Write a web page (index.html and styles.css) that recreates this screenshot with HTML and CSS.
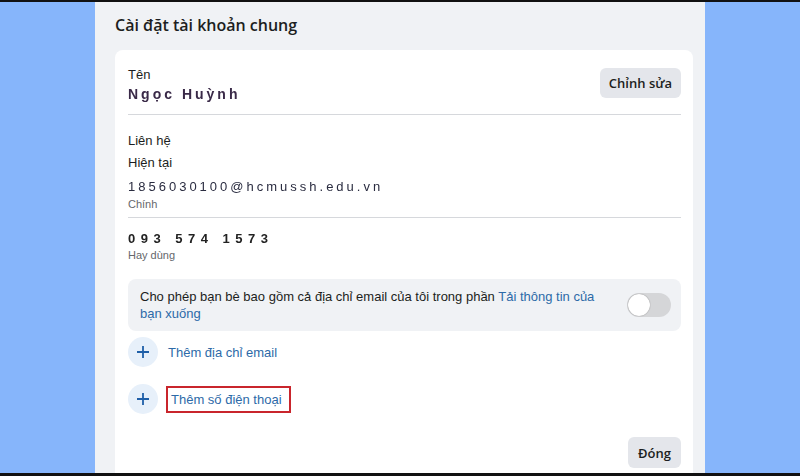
FILE: index.html
```html
<!DOCTYPE html>
<html lang="vi">
<head>
<meta charset="utf-8">
<link rel="stylesheet" href="styles.css">
</head>
<body>
<div class="frame">
  <div class="side"></div>
  <div class="panel">
    <h1 class="title">Cài đặt tài khoản chung</h1>
    <div class="card">
      <div class="name-row">
        <div>
          <div class="label">Tên</div>
          <div class="name">Ngọc Huỳnh</div>
        </div>
        <button class="btn">Chỉnh sửa</button>
      </div>
      <div class="divider"></div>
      <div class="label contact">Liên hệ</div>
      <div class="label current">Hiện tại</div>
      <div class="email">1856030100@hcmussh.edu.vn</div>
      <div class="sub">Chính</div>
      <div class="divider d2"></div>
      <div class="phone">093 574 1573</div>
      <div class="sub">Hay dùng</div>
      <div class="toggle-box">
        <p class="toggle-text">Cho phép bạn bè bao gồm cả địa chỉ email của tôi trong phần <span class="link">Tải thông tin của bạn xuống</span></p>
        <div class="switch"><div class="knob"></div></div>
      </div>
      <div class="add-row first">
        <div class="plus"><svg width="14" height="14" viewBox="0 0 14 14"><path d="M7 1v12M1 7h12" stroke="#1f5fa8" stroke-width="1.8" fill="none"/></svg></div>
        <span class="add-text">Thêm địa chỉ email</span>
      </div>
      <div class="add-row second">
        <div class="plus"><svg width="14" height="14" viewBox="0 0 14 14"><path d="M7 1v12M1 7h12" stroke="#1f5fa8" stroke-width="1.8" fill="none"/></svg></div>
        <span class="add-text boxed">Thêm số điện thoại</span>
      </div>
      <div class="footer">
        <button class="btn close">Đóng</button>
      </div>
    </div>
  </div>
  <div class="side"></div>
</div>
</body>
</html>
```
FILE: styles.css
```css
* { box-sizing: border-box; }
html, body { margin: 0; padding: 0; }
body {
  width: 800px;
  height: 476px;
  overflow: hidden;
  font-family: "Liberation Sans", Arial, sans-serif;
  color: #1c1e21;
  background: #000;
}
.frame {
  display: flex;
  height: 476px;
  border-top: 2px solid #111;
  border-bottom: 3px solid #111;
  overflow: hidden;
}
.side {
  width: 95px;
  flex: none;
  background: #86b5fb;
}
.panel {
  width: 610px;
  flex: none;
  background: #f0f2f5;
  padding: 0 12px 0 20px;
}
.title {
  margin: 0;
  padding-top: 12px;
  height: 48px;
  font-family: "Open Sans", "Liberation Sans", sans-serif;
  font-size: 16px;
  font-weight: 600;
  color: #1c1e21;
}
.card {
  background: #fff;
  border-radius: 8px;
  padding: 16px 12px 0 13px;
  height: 460px;
}
.name-row {
  display: flex;
  justify-content: space-between;
  align-items: flex-start;
  height: 48px;
}
.label {
  font-size: 13px;
  line-height: 18px;
  color: #1c1e21;
}
.name {
  font-size: 14px;
  font-weight: bold;
  letter-spacing: 3px;
  color: #3a2a48;
  line-height: 20px;
  filter: blur(0.5px);
}
.btn {
  border: none;
  background: #e4e6eb;
  border-radius: 6px;
  font-family: "Open Sans", "Liberation Sans", sans-serif;
  font-size: 13px;
  font-weight: 600;
  color: #1c1e21;
  height: 30px;
  padding: 0 9px;
  margin-top: 2px;
}
.divider {
  height: 1px;
  background: #d6d8dc;
}
.contact { margin-top: 17px; }
.current { margin-top: 4px; }
.email {
  margin-top: 6px;
  font-size: 13px;
  line-height: 18px;
  letter-spacing: 3px;
  color: #2a2c40;
  filter: blur(0.3px);
}
.sub {
  font-size: 11px;
  color: #65676b;
  line-height: 16px;
}
.d2 { margin-top: 5px; }
.phone {
  margin-top: 13px;
  font-size: 13px;
  font-weight: bold;
  letter-spacing: 5.5px;
  line-height: 16px;
  color: #222;
  filter: blur(0.4px);
}
.toggle-box {
  margin-top: 16px;
  background: #f0f2f5;
  border-radius: 8px;
  height: 52px;
  padding: 0 10px 0 12px;
  display: flex;
  align-items: center;
  justify-content: space-between;
}
.toggle-text {
  margin: 0;
  font-size: 13px;
  line-height: 17px;
  width: 470px;
  color: #1c1e21;
}
.link { color: #2d6aa8; }
.switch {
  width: 44px;
  height: 24px;
  border-radius: 12px;
  background: #d5d6d8;
  position: relative;
}
.knob {
  position: absolute;
  left: 1px;
  top: 1px;
  width: 22px;
  height: 22px;
  border-radius: 50%;
  background: #fff;
  box-shadow: 0 0 1px rgba(0,0,0,.5);
}
.add-row {
  display: flex;
  align-items: center;
  height: 32px;
}
.first { margin-top: 5px; }
.second { margin-top: 15px; }
.plus {
  width: 30px;
  height: 30px;
  border-radius: 50%;
  background: #e7f0fa;
  display: flex;
  align-items: center;
  justify-content: center;
  margin-left: 0;
  margin-right: 10px;
}
.add-text {
  font-size: 13px;
  color: #2d6aa8;
}
.boxed {
  border: 2px solid #c9252c;
  padding: 4px 7px 4px 3px;
  margin-left: -2px;
}
.footer {
  display: flex;
  justify-content: flex-end;
  margin-top: 20px;
}
.close {
  height: 31px;
  padding: 0 10px;
}
```
